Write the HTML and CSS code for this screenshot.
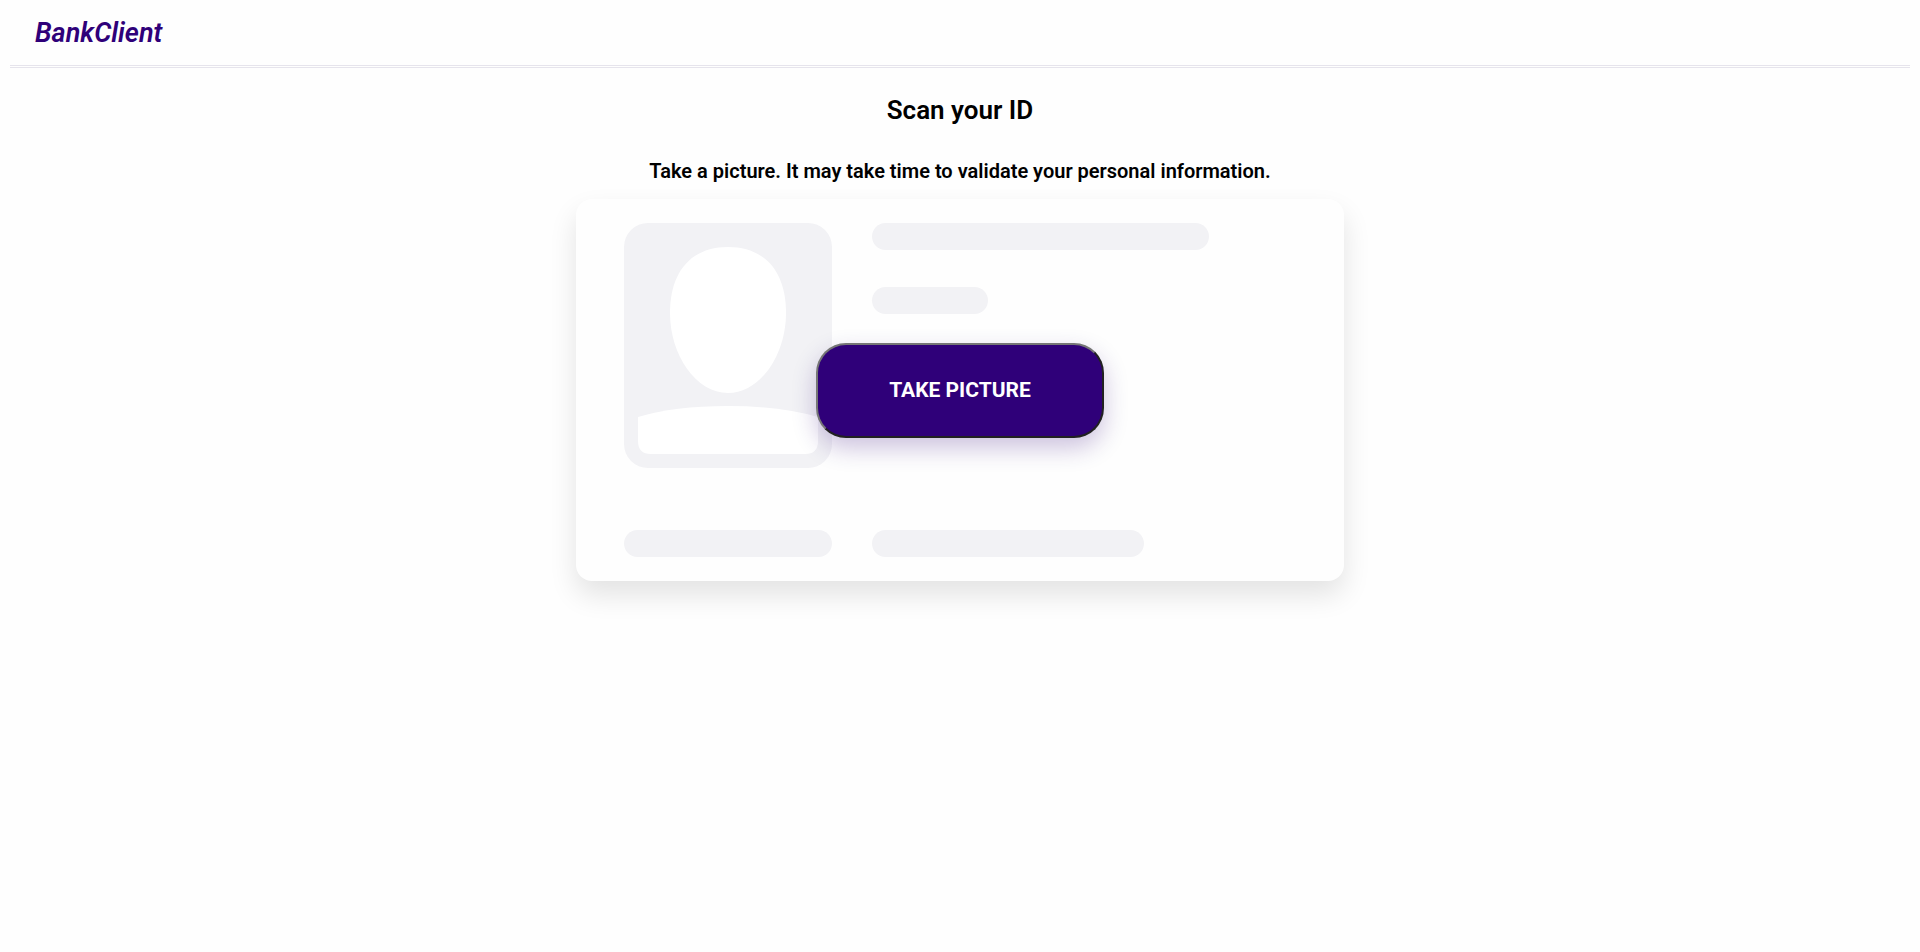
FILE: index.html
```html
<!DOCTYPE html>
<html lang="en">
<head>
<meta charset="utf-8">
<title>BankClient</title>
<link rel="stylesheet" href="styles.css">
</head>
<body>
<header class="header"><span class="logo">BankClient</span></header>
<main class="main">
  <h1 class="title">Scan your ID</h1>
  <p class="subtitle">Take a picture. It may take time to validate your personal information.</p>
  <section class="card">
    <div class="photo">
      <svg class="portrait" viewBox="0 0 208 245" aria-hidden="true">
        <path fill="#fff" d="M104 24C142 24 162 50 162 90C162 132 136 170 104 170C72 170 46 132 46 90C46 50 66 24 104 24Z"/>
        <path fill="#fff" d="M14 194Q50 183 104 183Q155 183 194 194V218Q194 231 181 231H27Q14 231 14 218Z"/>
      </svg>
    </div>
    <div class="lines">
      <div class="bar bar-name"></div>
      <div class="bar bar-short"></div>
    </div>
    <div class="bar"></div>
    <div class="bar bar-number"></div>
    <button class="take" type="button">TAKE PICTURE</button>
  </section>
</main>
</body>
</html>
```
FILE: styles.css
```css
* {
  box-sizing: border-box;
}

body {
  min-height: 100vh;
  margin: 0;
  font-family: Roboto, "Liberation Sans", sans-serif;
  color: #000;
  background: #fefefe;
}

.header {
  display: flex;
  align-items: center;
  height: 68px;
  margin: 0 10px;
  padding: 0 25px 3px;
  background: linear-gradient(#e6e4ec, #e6e4ec) 0 65px / 100% 1px no-repeat,
    linear-gradient(#e6e4ec, #e6e4ec) 0 67px / 100% 1px no-repeat;
}

.logo {
  font-size: 27px;
  font-weight: 600;
  font-style: italic;
  line-height: 32px;
  color: #2f0079;
}

.main {
  display: flex;
  flex-direction: column;
  align-items: center;
  padding: 26px 8px 48px;
}

.title {
  margin: 0 0 33px;
  font-size: 26px;
  font-weight: 600;
  line-height: 32px;
}

.subtitle {
  margin: 0 0 16px;
  font-size: 20px;
  font-weight: 600;
  line-height: 24px;
}

.card {
  position: relative;
  display: grid;
  grid-template-columns: 208px 1fr;
  gap: 62px 40px;
  width: 100%;
  max-width: 768px;
  padding: 24px 48px;
  border-radius: 16px;
  background: #fefefe;
  box-shadow: 0 14px 28px rgba(0, 0, 0, 0.11);
}

.photo {
  overflow: hidden;
  border-radius: 24px;
  background: #f2f2f5;
}

.portrait {
  display: block;
  width: 100%;
}

.lines {
  display: flex;
  flex-direction: column;
  gap: 37px;
}

.bar {
  height: 27px;
  border-radius: 14px;
  background: #f2f2f5;
}

.bar-name {
  width: 337px;
}

.bar-short {
  width: 116px;
}

.bar-number {
  width: 272px;
}

.take {
  position: absolute;
  inset: 0;
  width: 288px;
  height: 95px;
  margin: auto;
  border: 2px solid;
  border-color: #767676 #212121 #212121 #767676;
  border-radius: 30px;
  background: #2f0079;
  color: #fff;
  font-family: inherit;
  font-size: 21px;
  font-weight: 700;
  box-shadow: 0 10px 24px rgba(47, 0, 121, 0.24);
}
```
